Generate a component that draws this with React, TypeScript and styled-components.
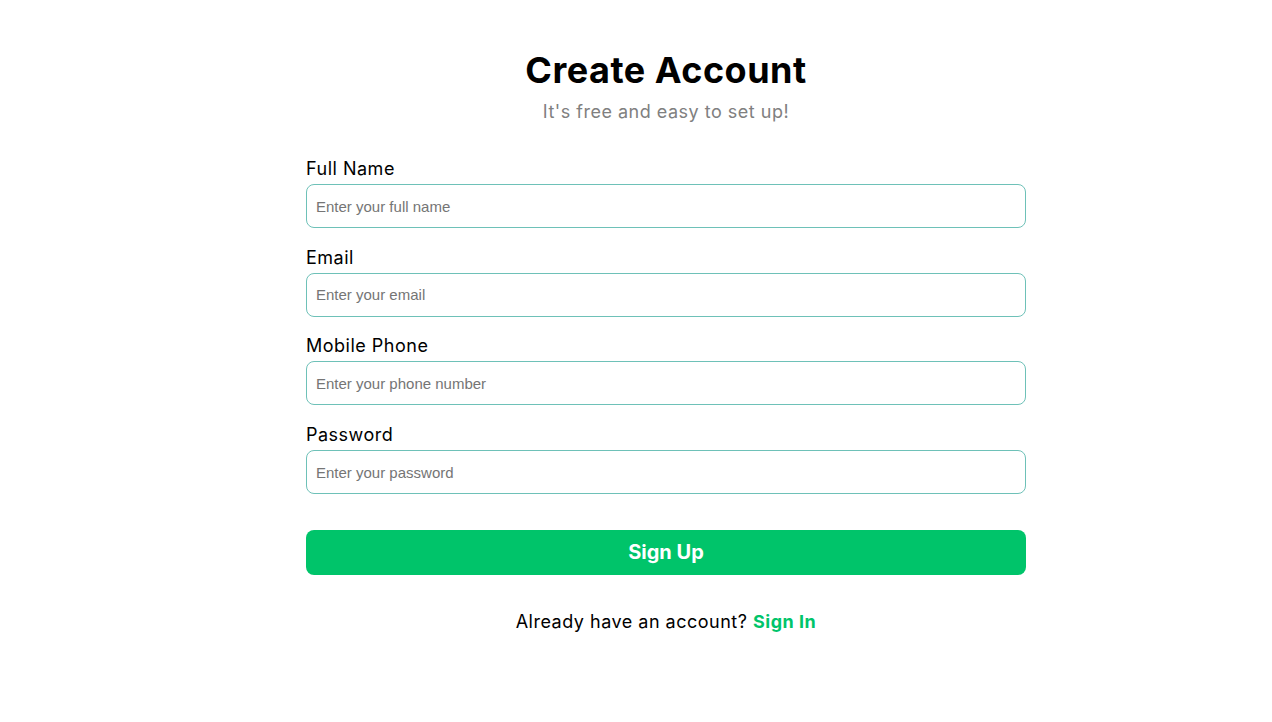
import React from 'react'
import styled, { createGlobalStyle } from 'styled-components'

const GlobalStyle = createGlobalStyle`
  * {
    box-sizing: border-box;
  }
  body {
    margin: 0;
    background: #ffffff;
    font-family: Inter, 'Noto Sans', sans-serif;
  }
`

const Page = styled.div`
  display: flex;
  justify-content: center;
  padding: 48px 0 0 60px;
`

const FormContainer = styled.form`
  width: 720px;
  display: flex;
  flex-direction: column;
`

const Header = styled.div`
  display: flex;
  flex-direction: column;
  align-items: center;
  margin-bottom: 34px;
`

const Title = styled.h1`
  margin: 0;
  font-size: 36px;
  line-height: 44px;
  font-weight: 700;
  letter-spacing: 0.5px;
  color: #000000;
`

const Subtitle = styled.p`
  margin: 8px 0 0 0;
  font-size: 18px;
  line-height: 24px;
  letter-spacing: 0.5px;
  color: #808080;
`

const Field = styled.div`
  display: flex;
  flex-direction: column;
  margin-bottom: 18.7px;
`

const Label = styled.label`
  font-size: 18px;
  line-height: 22px;
  letter-spacing: 0.5px;
  color: #000000;
  margin-bottom: 4px;
`

const Input = styled.input`
  height: 44px;
  width: 100%;
  border: 1px solid #6ec1b8;
  border-radius: 8px;
  padding: 0 9px;
  font-family: 'Liberation Sans', Arial, sans-serif;
  font-size: 15px;
  outline: none;
  &::placeholder {
    color: #757575;
  }
`

const SubmitButton = styled.button`
  height: 45px;
  margin-top: 17px;
  border: 0;
  border-radius: 8px;
  background-color: #00c46a;
  color: #ffffff;
  font-family: Inter, 'Noto Sans', sans-serif;
  font-size: 20px;
  font-weight: 700;
  cursor: pointer;
`

const Footer = styled.p`
  margin: 36px 0 0 0;
  text-align: center;
  font-size: 18px;
  line-height: 22px;
  letter-spacing: 0.5px;
  color: #000000;
`

const SignInLink = styled.a`
  color: #00c46a;
  font-weight: 700;
  text-decoration: none;
  cursor: pointer;
`

const fields = [
  { id: 'fullName', label: 'Full Name', type: 'text', placeholder: 'Enter your full name' },
  { id: 'email', label: 'Email', type: 'email', placeholder: 'Enter your email' },
  { id: 'phone', label: 'Mobile Phone', type: 'tel', placeholder: 'Enter your phone number' },
  { id: 'password', label: 'Password', type: 'password', placeholder: 'Enter your password' },
]

const App = () => {
  return (
    <>
      <GlobalStyle />
      <Page>
        <FormContainer onSubmit={(e) => e.preventDefault()}>
          <Header>
            <Title>Create Account</Title>
            <Subtitle>It's free and easy to set up!</Subtitle>
          </Header>
          {fields.map((field) => (
            <Field key={field.id}>
              <Label htmlFor={field.id}>{field.label}</Label>
              <Input id={field.id} type={field.type} placeholder={field.placeholder} />
            </Field>
          ))}
          <SubmitButton type="submit">Sign Up</SubmitButton>
          <Footer>
            Already have an account? <SignInLink>Sign In</SignInLink>
          </Footer>
        </FormContainer>
      </Page>
    </>
  )
}

export default App
